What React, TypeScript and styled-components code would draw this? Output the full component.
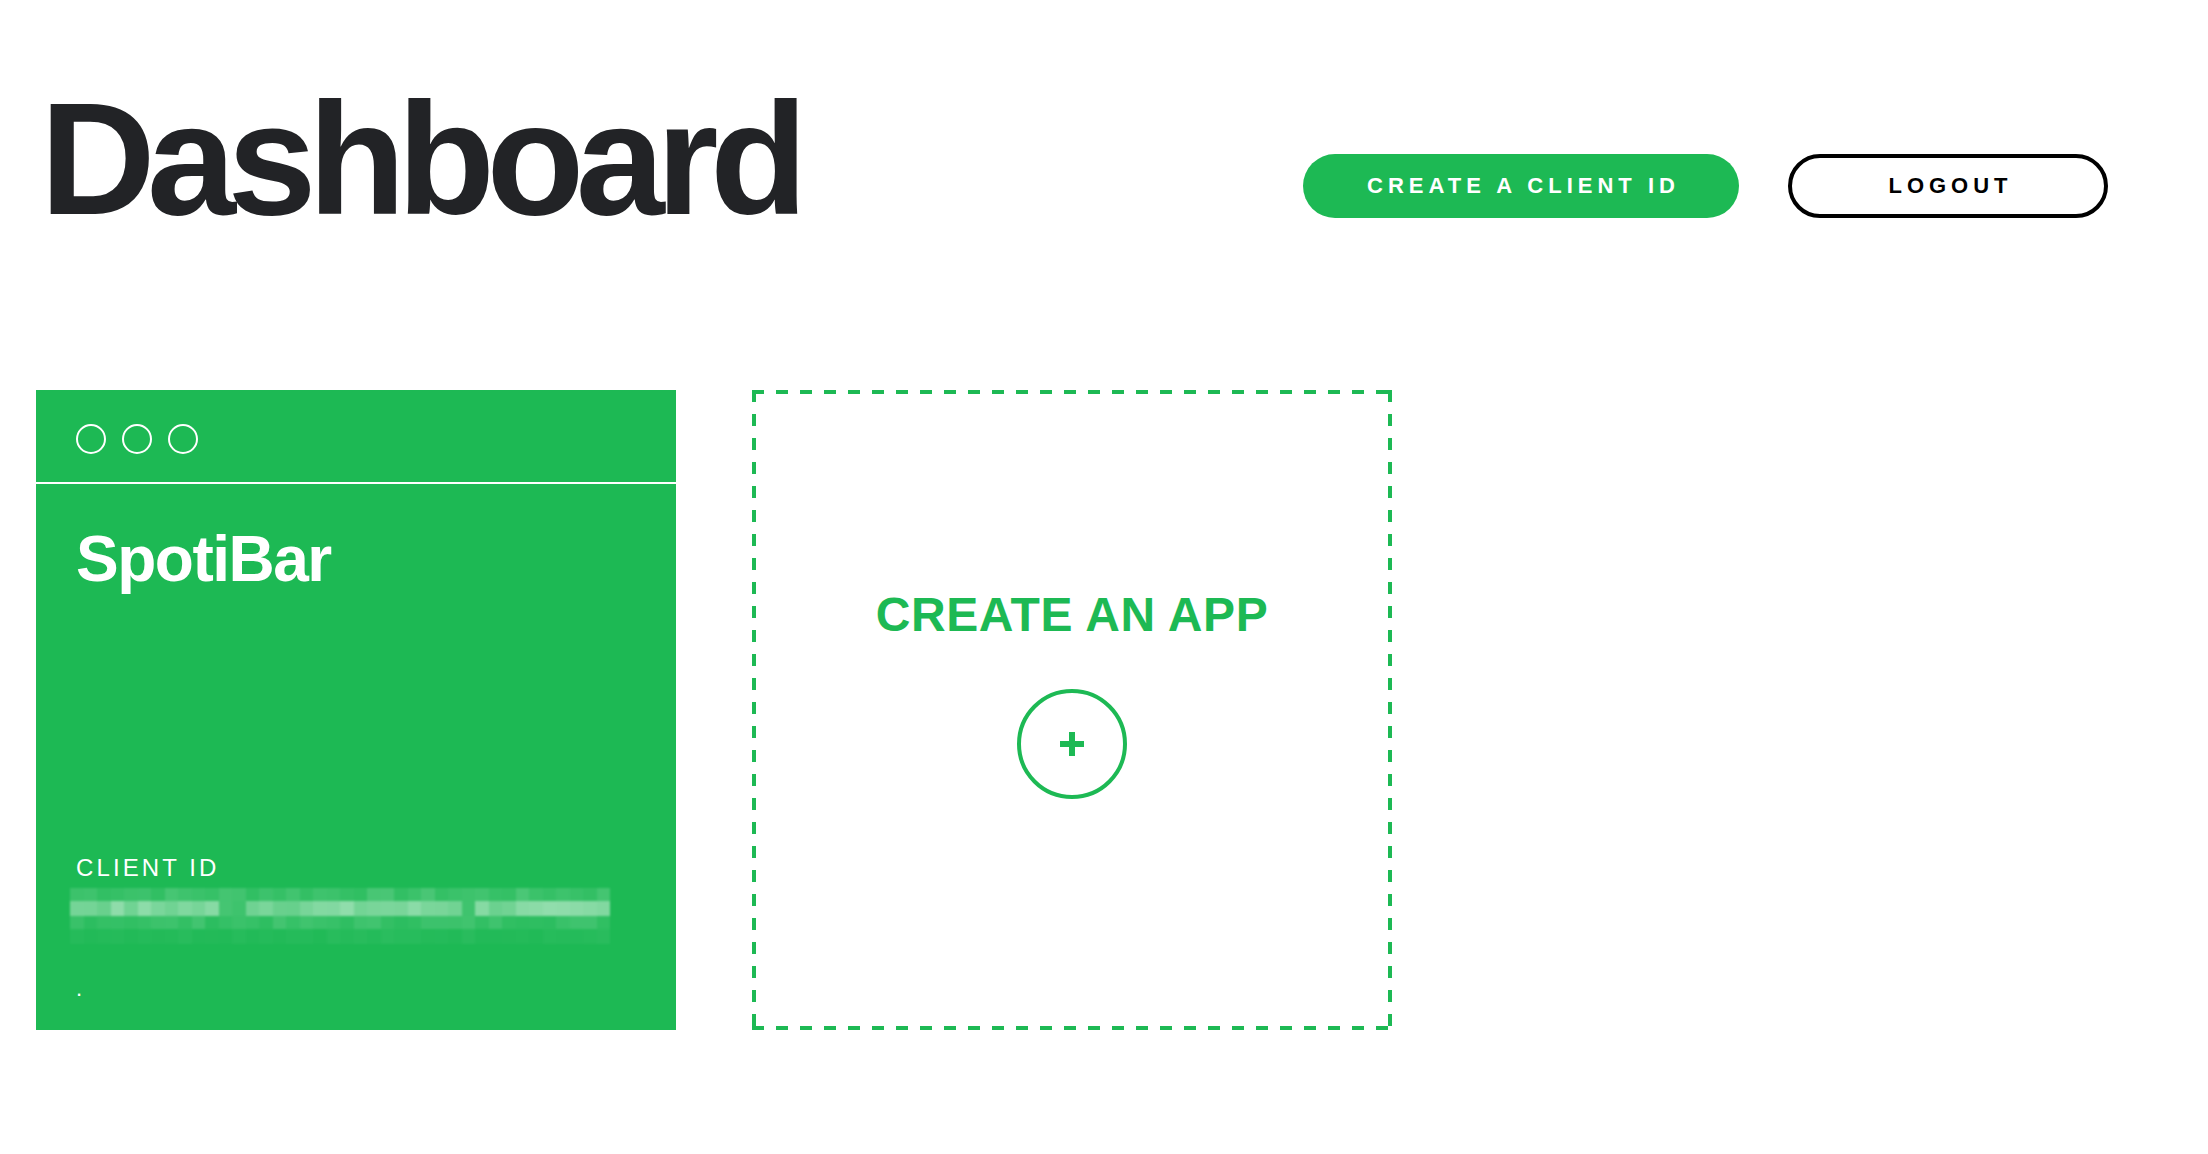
import React from "react";
import styled, { createGlobalStyle } from "styled-components";

const GREEN = "#1db954";
const INK = "#222326";

const Global = createGlobalStyle`
  html, body {
    margin: 0;
    padding: 0;
    background: #ffffff;
  }
  body {
    font-family: "Liberation Sans", Arial, sans-serif;
    -webkit-font-smoothing: antialiased;
  }
`;

const Page = styled.div`
  padding: 0 100px 0 36px;
  min-height: 1154px;
  box-sizing: border-box;
`;

const Header = styled.header`
  display: flex;
  justify-content: space-between;
  align-items: flex-start;
  padding-top: 79px;
`;

const Title = styled.h1`
  margin: 0 0 0 4px;
  font-size: 160px;
  line-height: 160px;
  font-weight: 700;
  letter-spacing: -8.5px;
  color: ${INK};
`;

const Actions = styled.div`
  display: flex;
  gap: 49px;
  margin-top: 75px;
`;

const PillButton = styled.button<{ $variant: "primary" | "outline"; $width: number }>`
  box-sizing: border-box;
  width: ${(p) => p.$width}px;
  height: 64px;
  border-radius: 32px;
  font-family: "Liberation Sans", Arial, sans-serif;
  font-size: 22px;
  font-weight: 700;
  letter-spacing: 5px;
  padding: 0 0 0 5px;
  text-transform: uppercase;
  cursor: pointer;
  background: ${(p) => (p.$variant === "primary" ? GREEN : "#ffffff")};
  color: ${(p) => (p.$variant === "primary" ? "#ffffff" : "#000000")};
  border: ${(p) => (p.$variant === "primary" ? "none" : "4px solid #000000")};
`;

const Cards = styled.section`
  display: flex;
  gap: 76px;
  margin-top: 151px;
`;

const AppCard = styled.article`
  width: 640px;
  height: 640px;
  background: ${GREEN};
  display: flex;
  flex-direction: column;
  color: #ffffff;
`;

const TitleBar = styled.div`
  box-sizing: border-box;
  height: 94px;
  padding: 34px 0 0 40px;
  display: flex;
  gap: 16px;
  border-bottom: 2px solid #ffffff;
`;

const WindowDot = styled.span`
  box-sizing: border-box;
  width: 30px;
  height: 30px;
  border-radius: 50%;
  border: 2px solid #ffffff;
`;

const CardBody = styled.div`
  flex: 1;
  display: flex;
  flex-direction: column;
  padding: 43px 40px 30px;
`;

const AppName = styled.h2`
  margin: 0;
  font-size: 64px;
  line-height: 64px;
  font-weight: 700;
  letter-spacing: -1.5px;
`;

const Footer = styled.div`
  margin-top: auto;
  display: flex;
  flex-direction: column;
`;

const FieldLabel = styled.div`
  font-size: 24px;
  line-height: 24px;
  letter-spacing: 3.1px;
  font-weight: 400;
`;

const Blurred = styled.div`
  margin: 8px 0 0 -6px;
  width: 540px;
  display: grid;
  grid-template-columns: repeat(40, 1fr);
  grid-template-rows: 13px 15px 13px 15px;
  filter: blur(1.2px);
`;

const Cell = styled.span<{ $a: number }>`
  background: rgba(255, 255, 255, ${(p) => p.$a});
`;

const Period = styled.div`
  margin-top: 34px;
  font-size: 22px;
  line-height: 22px;
`;

const dash = (dir: string) =>
  `repeating-linear-gradient(${dir}, ${GREEN} 0 12px, transparent 12px 24px)`;

const NewAppCard = styled.button`
  box-sizing: border-box;
  width: 640px;
  height: 640px;
  border: none;
  background-color: #ffffff;
  background-image: ${dash("to right")}, ${dash("to right")}, ${dash("to bottom")},
    ${dash("to bottom")};
  background-size: 100% 4px, 100% 4px, 4px 100%, 4px 100%;
  background-position: 0 0, 0 100%, 0 0, 100% 0;
  background-repeat: no-repeat;
  display: flex;
  flex-direction: column;
  align-items: center;
  padding: 201px 0 0;
  cursor: pointer;
`;

const CreateLabel = styled.span`
  font-family: "Liberation Sans", Arial, sans-serif;
  font-size: 48px;
  line-height: 48px;
  font-weight: 700;
  color: ${GREEN};
  letter-spacing: 0.6px;
`;

const PlusCircle = styled.span`
  box-sizing: border-box;
  margin-top: 50px;
  width: 110px;
  height: 110px;
  border-radius: 50%;
  border: 4px solid ${GREEN};
  display: flex;
  align-items: center;
  justify-content: center;
`;

// Mosaic data for the pixelated (redacted) client id
function seeded(seed: number) {
  let s = seed;
  return () => {
    s = (s * 9301 + 49297) % 233280;
    return s / 233280;
  };
}
const rnd = seeded(7);
const gaps = new Set([11, 12, 29]);
const rows: number[][] = [0, 1, 2, 3].map((r) =>
  Array.from({ length: 40 }, (_, c) => {
    const v = rnd();
    if (r === 0) return 0.08 + v * 0.12;
    if (r === 1) return gaps.has(c) ? 0.14 + v * 0.06 : 0.32 + v * 0.2;
    if (r === 2) return 0.07 + v * 0.1;
    return 0.02 + v * 0.04;
  })
);

const PlusIcon = () => (
  <svg width="24" height="24" viewBox="0 0 24 24" aria-hidden="true">
    <rect x="0" y="9" width="24" height="6" fill={GREEN} />
    <rect x="9" y="0" width="6" height="24" fill={GREEN} />
  </svg>
);

export default function App() {
  return (
    <>
      <Global />
      <Page>
        <Header>
          <Title>Dashboard</Title>
          <Actions>
            <PillButton $variant="primary" $width={436}>
              Create a client ID
            </PillButton>
            <PillButton $variant="outline" $width={320}>
              Logout
            </PillButton>
          </Actions>
        </Header>
        <Cards>
          <AppCard>
            <TitleBar>
              <WindowDot />
              <WindowDot />
              <WindowDot />
            </TitleBar>
            <CardBody>
              <AppName>SpotiBar</AppName>
              <Footer>
                <FieldLabel>CLIENT ID</FieldLabel>
                <Blurred>
                  {rows.map((row, r) =>
                    row.map((a, c) => <Cell key={`${r}-${c}`} $a={a} />)
                  )}
                </Blurred>
                <Period>.</Period>
              </Footer>
            </CardBody>
          </AppCard>
          <NewAppCard>
            <CreateLabel>CREATE AN APP</CreateLabel>
            <PlusCircle>
              <PlusIcon />
            </PlusCircle>
          </NewAppCard>
        </Cards>
      </Page>
    </>
  );
}
